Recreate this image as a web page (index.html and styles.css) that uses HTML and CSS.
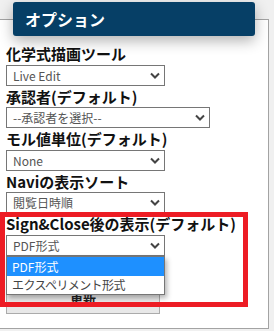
FILE: index.html
```html
<!DOCTYPE html>
<html lang="ja">
<head>
<meta charset="utf-8">
<link rel="stylesheet" href="styles.css">
</head>
<body>
<div class="page">
  <div class="card">
    <div class="field">
      <div class="label">化学式描画ツール</div>
      <div class="select w-sm"><span>Live Edit</span><svg class="chev" width="10" height="7" viewBox="0 0 10 7"><path d="M1 1.5 L5 5.5 L9 1.5" fill="none" stroke="#444" stroke-width="2"/></svg></div>
    </div>
    <div class="field">
      <div class="label">承認者(デフォルト)</div>
      <div class="select w-lg"><span>--承認者を選択--</span><svg class="chev" width="10" height="7" viewBox="0 0 10 7"><path d="M1 1.5 L5 5.5 L9 1.5" fill="none" stroke="#444" stroke-width="2"/></svg></div>
    </div>
    <div class="field">
      <div class="label">モル値単位(デフォルト)</div>
      <div class="select w-sm"><span>None</span><svg class="chev" width="10" height="7" viewBox="0 0 10 7"><path d="M1 1.5 L5 5.5 L9 1.5" fill="none" stroke="#444" stroke-width="2"/></svg></div>
    </div>
    <div class="field">
      <div class="label">Naviの表示ソート</div>
      <div class="select w-sm"><span>閲覧日時順</span><svg class="chev" width="10" height="7" viewBox="0 0 10 7"><path d="M1 1.5 L5 5.5 L9 1.5" fill="none" stroke="#444" stroke-width="2"/></svg></div>
    </div>
    <div class="field">
      <div class="label">Sign&amp;Close後の表示(デフォルト)</div>
      <div class="select-wrap">
        <div class="select w-sm"><span>PDF形式</span><svg class="chev" width="10" height="7" viewBox="0 0 10 7"><path d="M1 1.5 L5 5.5 L9 1.5" fill="none" stroke="#444" stroke-width="2"/></svg></div>
        <div class="options">
          <div class="option selected">PDF形式</div>
          <div class="option narrow">エクスペリメント形式</div>
        </div>
      </div>
    </div>
    <button class="btn">更新</button>
  </div>
  <div class="header">オプション</div>
  <div class="annot"></div>
</div>
</body>
</html>
```
FILE: styles.css
```css
html, body {
  margin: 0;
  padding: 0;
}
body {
  background: #f0f0f0;
  font-family: "Noto Sans CJK JP", "Noto Sans", sans-serif;
}
.page {
  position: relative;
  width: 274px;
  height: 331px;
  overflow: hidden;
}
.card {
  box-sizing: border-box;
  margin: 19px 0 0 -1px;
  width: 270px;
  height: 310px;
  background: #fff;
  border: 1px solid #a3a3a3;
  padding: 23px 0 0 6px;
}
.field {
  display: flex;
  flex-direction: column;
  align-items: flex-start;
}
.label {
  height: 21.5px;
  line-height: 21.5px;
  font-size: 15px;
  font-weight: bold;
  color: #111;
  white-space: nowrap;
}
.select {
  box-sizing: border-box;
  height: 21px;
  border: 1px solid #767676;
  background: #fff;
  display: flex;
  align-items: center;
  justify-content: space-between;
  padding: 0 4px 0 6px;
  font-size: 12px;
  color: #555;
}
.w-sm { width: 159px; }
.w-lg { width: 204px; }
.chev { display: block; }
.select-wrap {
  position: relative;
}
.options {
  position: absolute;
  left: 0;
  top: 100%;
  width: 159px;
  box-sizing: border-box;
  border: 1px solid #767676;
  background: #fff;
  box-shadow: 2px 3px 5px rgba(0, 0, 0, 0.3);
  z-index: 2;
}
.option {
  height: 18px;
  line-height: 18px;
  padding-left: 5px;
  font-size: 12px;
  color: #444;
  white-space: nowrap;
}
.option.narrow {
  letter-spacing: -0.6px;
}
.option.selected {
  height: 19px;
  line-height: 19px;
  background: #1e90ff;
  color: #fff;
}
.btn {
  display: block;
  box-sizing: border-box;
  margin-top: 28px;
  width: 154px;
  height: 30px;
  background: #e8e8e8;
  border: 1px solid #ababab;
  font-family: "Noto Sans CJK JP", sans-serif;
  font-size: 13px;
  font-weight: bold;
  color: #222;
  padding: 0;
}
.header {
  position: absolute;
  left: 13px;
  top: 2px;
  width: 242px;
  height: 34px;
  box-sizing: border-box;
  padding-left: 12px;
  line-height: 34px;
  background: #063f66;
  border-radius: 3px;
  color: #fff;
  font-size: 16px;
  font-weight: bold;
  box-shadow: 0 5px 14px rgba(0, 0, 0, 0.3);
}
.annot {
  position: absolute;
  left: 0;
  top: 212px;
  width: 248px;
  height: 95px;
  box-sizing: border-box;
  border: 5px solid #ed1c24;
  z-index: 3;
}
```
